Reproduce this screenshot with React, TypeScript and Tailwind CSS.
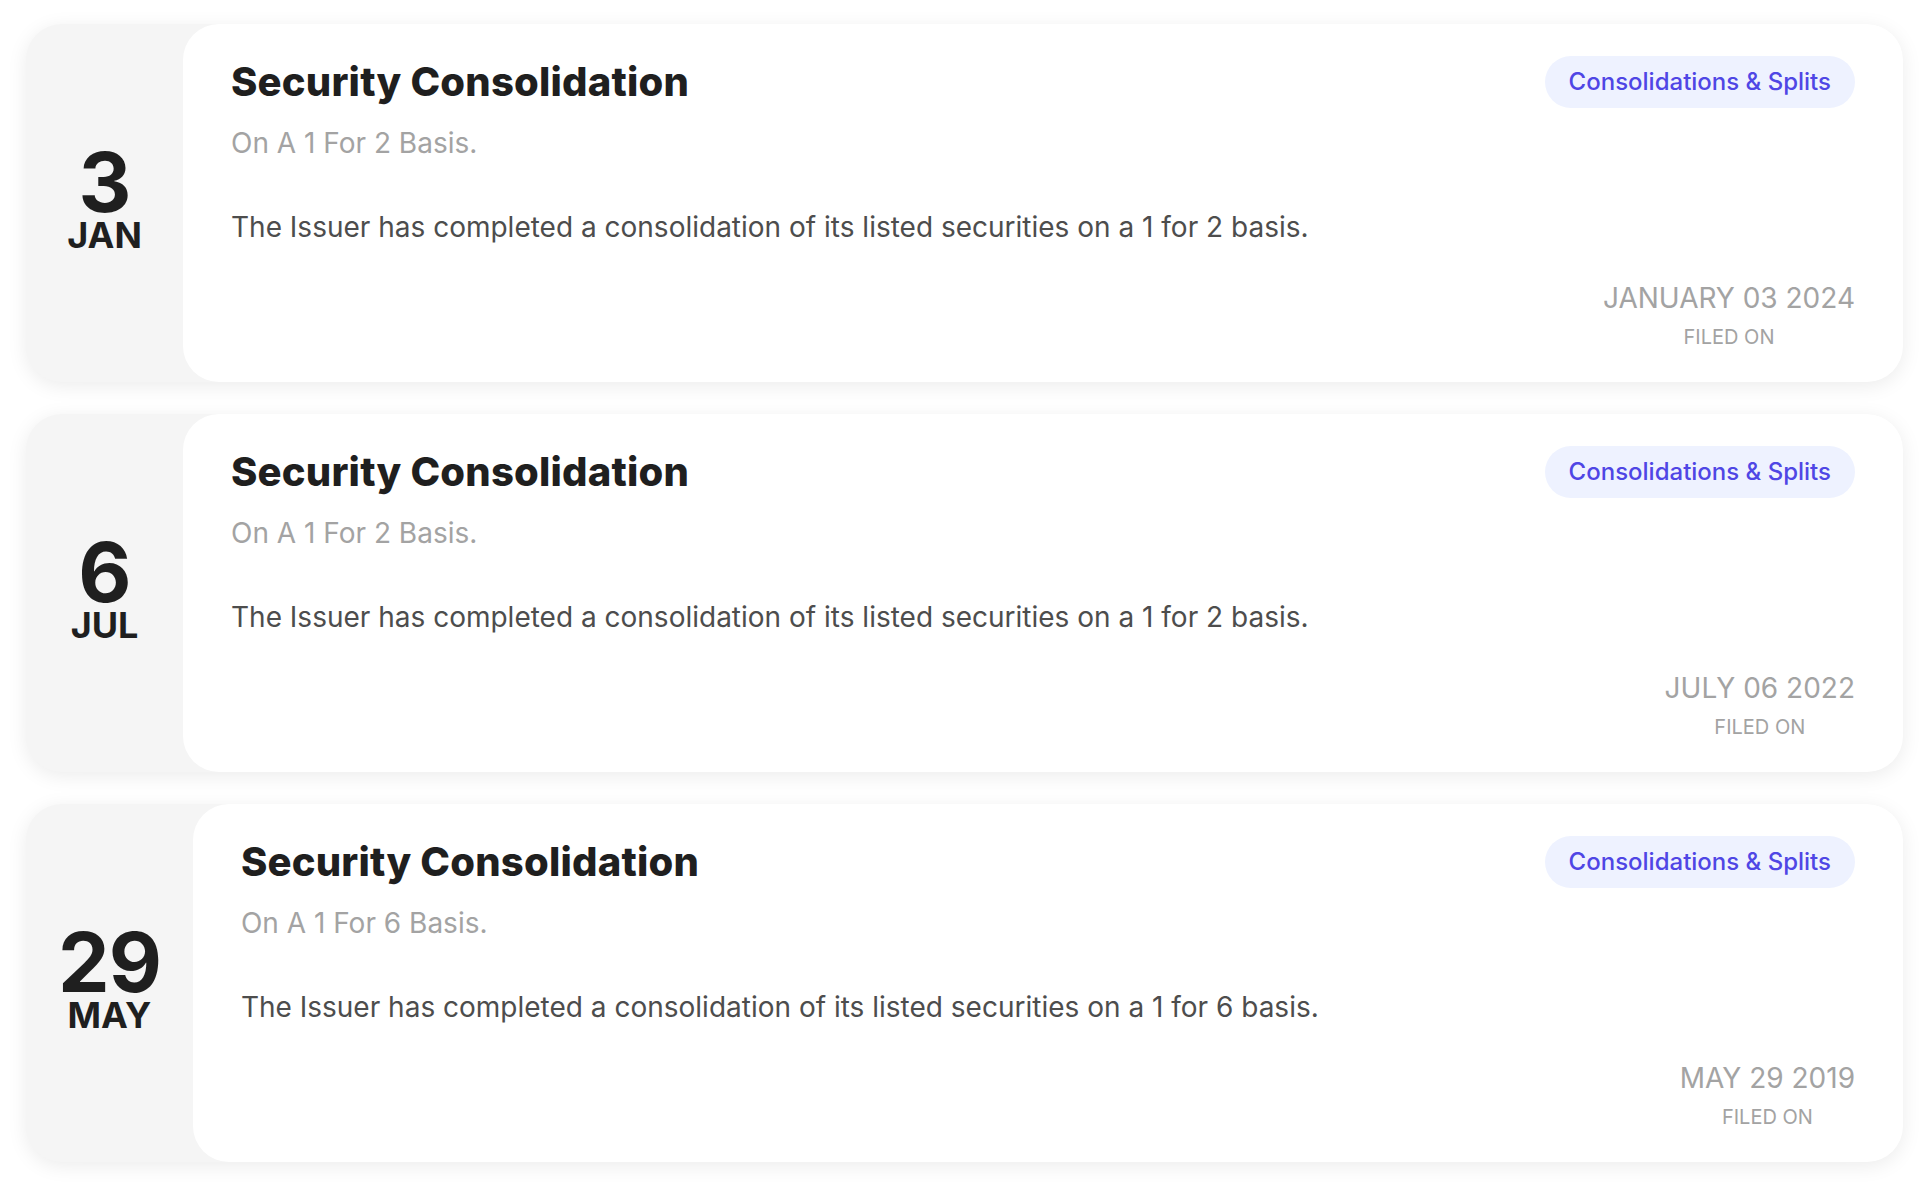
import React from "react";

type Item = {
  day: string;
  month: string;
  title: string;
  subtitle: string;
  body: string;
  filed: string;
};

const items: Item[] = [
  {
    day: "3",
    month: "JAN",
    title: "Security Consolidation",
    subtitle: "On A 1 For 2 Basis.",
    body: "The Issuer has completed a consolidation of its listed securities on a 1 for 2 basis.",
    filed: "JANUARY 03 2024",
  },
  {
    day: "6",
    month: "JUL",
    title: "Security Consolidation",
    subtitle: "On A 1 For 2 Basis.",
    body: "The Issuer has completed a consolidation of its listed securities on a 1 for 2 basis.",
    filed: "JULY 06 2022",
  },
  {
    day: "29",
    month: "MAY",
    title: "Security Consolidation",
    subtitle: "On A 1 For 6 Basis.",
    body: "The Issuer has completed a consolidation of its listed securities on a 1 for 6 basis.",
    filed: "MAY 29 2019",
  },
];

function Card({ item }: { item: Item }) {
  return (
    <div className="flex rounded-[36px] bg-[#f5f5f5] shadow-[0_4px_20px_rgba(0,0,0,0.08)]">
      <div className="flex min-w-[157px] flex-col items-center justify-center px-[32px] pb-[10px] text-[#1f1f1f]">
        <div className="text-[82px] font-bold leading-[74px] tracking-[-1px]">{item.day}</div>
        <div className="text-[36px] font-bold leading-[30px]">{item.month}</div>
      </div>
      <div className="flex flex-1 flex-col rounded-[36px] bg-white px-[48px] pt-[32px] pb-[31px]">
        <div className="flex h-[52px] items-center justify-between">
          <h2 className="text-[40px] font-extrabold leading-[46px] tracking-[0.2px] text-[#1f1f1f]">
            {item.title}
          </h2>
          <span className="flex h-[52px] items-center rounded-full bg-[#eef2ff] px-6 text-[24px] font-medium text-[#4f46e5]">
            Consolidations &amp; Splits
          </span>
        </div>
        <p className="mt-[15px] text-[28px] leading-[40px] text-[#a3a3a3]">{item.subtitle}</p>
        <p className="mt-[44px] text-[28px] leading-[40px] text-[#4d4d4d]">{item.body}</p>
        <div className="mt-[31px] flex justify-end">
          <div className="flex flex-col items-center">
            <div className="text-[28px] leading-[40px] text-[#a3a3a3]">{item.filed}</div>
            <div className="mt-[5px] text-[20px] leading-[28px] text-[#a3a3a3]">FILED ON</div>
          </div>
        </div>
      </div>
    </div>
  );
}

export default function App() {
  return (
    <div
      className="min-h-screen bg-white pt-[24px] pl-[26px] pr-[27px] pb-[22px]"
      style={{ fontFamily: "Inter, 'Noto Sans', sans-serif" }}
    >
      <div className="flex flex-col gap-[32px]">
        {items.map((it, i) => (
          <Card key={i} item={it} />
        ))}
      </div>
    </div>
  );
}
